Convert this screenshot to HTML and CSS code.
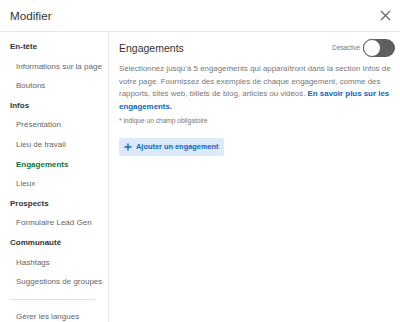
FILE: index.html
```html
<!DOCTYPE html>
<html lang="fr">
<head>
    <meta charset="UTF-8">
    <title>Modifier</title>
    <link rel="stylesheet" href="styles.css">
</head>
<body>
<div class="modal">
    <div class="modal-header">
        <h1>Modifier</h1>
        <button class="close" aria-label="Fermer">
            <svg width="11" height="11" viewBox="0 0 11 11"><path d="M1 1L10 10M10 1L1 10" stroke="#666" stroke-width="1.2" fill="none"/></svg>
        </button>
    </div>
    <div class="modal-body">
        <nav class="sidebar">
            <div class="group">En-tête</div>
            <a class="item">Informations sur la page</a>
            <a class="item">Boutons</a>
            <div class="group">Infos</div>
            <a class="item">Présentation</a>
            <a class="item">Lieu de travail</a>
            <a class="item active">Engagements</a>
            <a class="item">Lieux</a>
            <div class="group">Prospects</div>
            <a class="item">Formulaire Lead Gen</a>
            <div class="group">Communauté</div>
            <a class="item">Hashtags</a>
            <a class="item">Suggestions de groupes</a>
            <hr class="sep">
            <a class="item">Gérer les langues</a>
        </nav>
        <main class="content">
            <div class="content-head">
                <h2>Engagements</h2>
                <div class="toggle-wrap">
                    <span class="toggle-label">Désactivé</span>
                    <span class="toggle"><span class="knob"></span></span>
                </div>
            </div>
            <p class="desc">Sélectionnez jusqu’à 5 engagements qui apparaîtront dans la section Infos de votre page. Fournissez des exemples de chaque engagement, comme des rapports, sites web, billets de blog, articles ou vidéos. <a href="#">En savoir plus sur les engagements.</a></p>
            <p class="required">* indique un champ obligatoire</p>
            <button class="add">
                <svg width="8" height="8" viewBox="0 0 8 8"><path d="M4 0.5V7.5M0.5 4H7.5" stroke="#0a66c2" stroke-width="1.3" fill="none"/></svg>
                Ajouter un engagement
            </button>
        </main>
    </div>
</div>
</body>
</html>
```

FILE: styles.css
```css
* {
    box-sizing: border-box;
    margin: 0;
    padding: 0;
}

body {
    font-family: "Liberation Sans", Arial, sans-serif;
    background: #fff;
    color: #333;
    width: 400px;
    height: 322px;
    overflow: hidden;
}

.modal-header {
    height: 32px;
    border-bottom: 1px solid #e8e8e8;
    display: flex;
    align-items: center;
    justify-content: space-between;
    padding: 0 9px 0 10px;
}

.modal-header h1 {
    font-size: 11.7px;
    font-weight: normal;
    color: #333;
}

.close {
    border: none;
    background: none;
    display: flex;
}

.modal-body {
    display: flex;
    height: 290px;
}

.sidebar {
    width: 109px;
    border-right: 1px solid #e8e8e8;
    padding-top: 5px;
    font-size: 8px;
    flex-shrink: 0;
}

.group, .item {
    display: block;
    height: 19.6px;
    line-height: 19.6px;
    white-space: nowrap;
}

.group {
    padding-left: 10px;
    font-weight: bold;
    color: #333;
}

.item {
    padding-left: 16px;
    color: #666;
}

.item.active {
    color: #057642;
    font-weight: bold;
}

.sep {
    border: none;
    border-top: 1px solid #e0e0e0;
    margin: 7px 13px 7px 10px;
}

.content {
    flex: 1;
    padding: 5px 5px 0 10px;
}

.content-head {
    display: flex;
    align-items: center;
    justify-content: space-between;
    height: 21px;
}

.content-head h2 {
    font-size: 10.5px;
    font-weight: normal;
    color: #333;
}

.toggle-wrap {
    display: flex;
    align-items: center;
    gap: 3px;
}

.toggle-label {
    font-size: 6.3px;
    color: #777;
}

.toggle {
    width: 32px;
    height: 18px;
    border-radius: 9px;
    background: #5f5f5f;
    display: flex;
    align-items: center;
}

.knob {
    width: 18px;
    height: 18px;
    border-radius: 50%;
    background: #fff;
    border: 1.5px solid #5f5f5f;
}

.desc {
    margin-top: 5px;
    margin-right: 3px;
    font-size: 7.9px;
    line-height: 12.7px;
    color: #777;
}

.desc a {
    color: #0a66c2;
    font-weight: bold;
    text-decoration: none;
}

.required {
    margin-top: 1px;
    font-size: 6.6px;
    line-height: 12px;
    color: #777;
}

.add {
    margin-top: 11px;
    display: flex;
    align-items: center;
    gap: 4px;
    border: none;
    border-radius: 3px;
    background: #dce9f9;
    color: #0a66c2;
    font-family: inherit;
    font-size: 7.4px;
    font-weight: bold;
    height: 18px;
    padding: 0 5px;
}
```
